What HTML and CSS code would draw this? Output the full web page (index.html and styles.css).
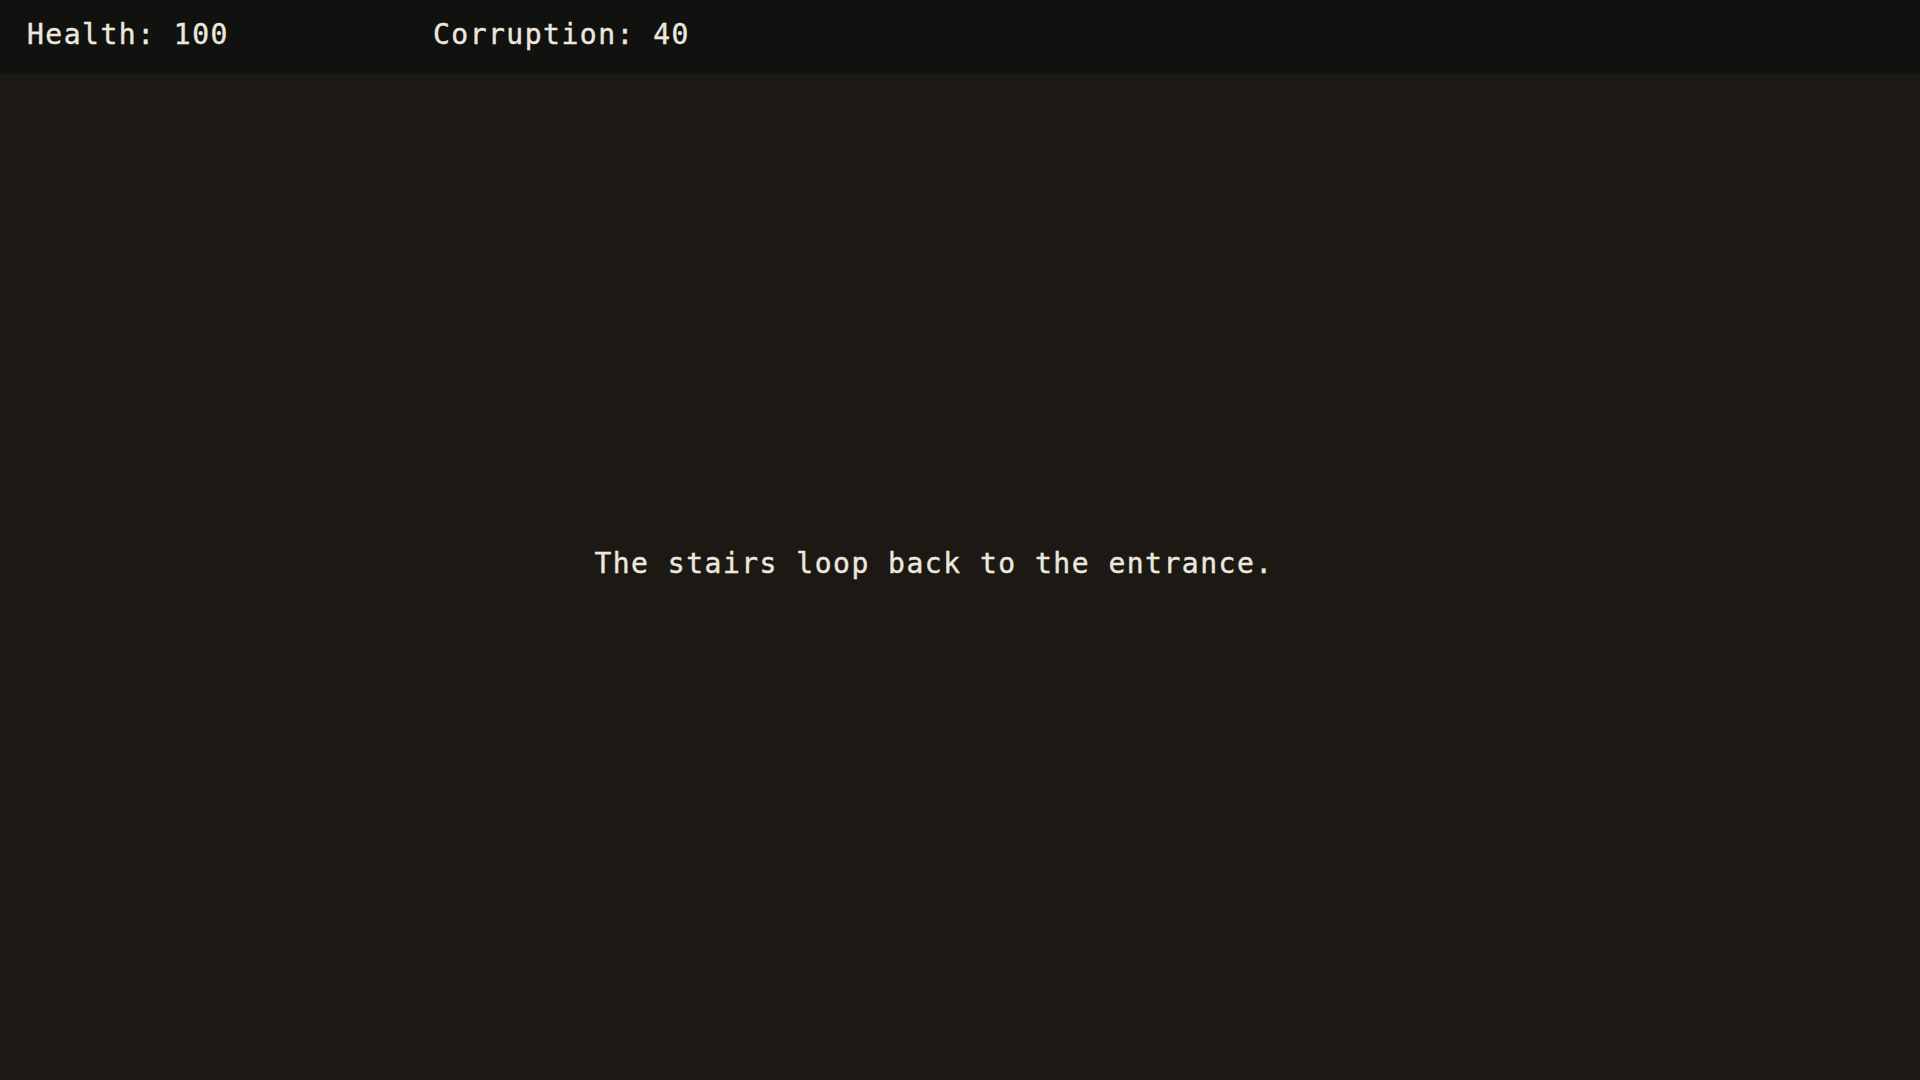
FILE: index.html
```html
<!DOCTYPE html>
<html lang="en">
<head>
  <meta charset="UTF-8">
  <meta name="viewport" content="width=device-width, initial-scale=1.0">
  <title>Descent</title>
  <link rel="stylesheet" href="styles.css">
</head>
<body>

  <div class="stats">
    <span class="stat">Health: 100</span>
    <span class="stat">Corruption: 40</span>
  </div>

  <main class="scene">
    <p class="narration">The stairs loop back to the entrance.</p>
  </main>

</body>
</html>
```

FILE: styles.css
```css
html, body {
  height: 100%;
}

body {
  background-color: #1c1915;
  color: #ece8df;
  margin: 0;
  padding: 0;
  font-family: 'DejaVu Sans Mono', 'Liberation Mono', monospace;
  font-size: 28px;
  letter-spacing: 1.5px;
  -webkit-text-stroke: 0.4px #ece8df;
  display: flex;
  flex-direction: column;
}

.stats {
  background-color: #111110;
  height: 74px;
  box-sizing: border-box;
  padding: 0 0 5px 27px;
  display: flex;
  align-items: center;
  gap: 204px;
  flex-shrink: 0;
}

.scene {
  flex: 1;
  display: flex;
  align-items: center;
  justify-content: center;
  padding: 0 52px 28px 0;
}

.narration {
  margin: 0;
}
```
